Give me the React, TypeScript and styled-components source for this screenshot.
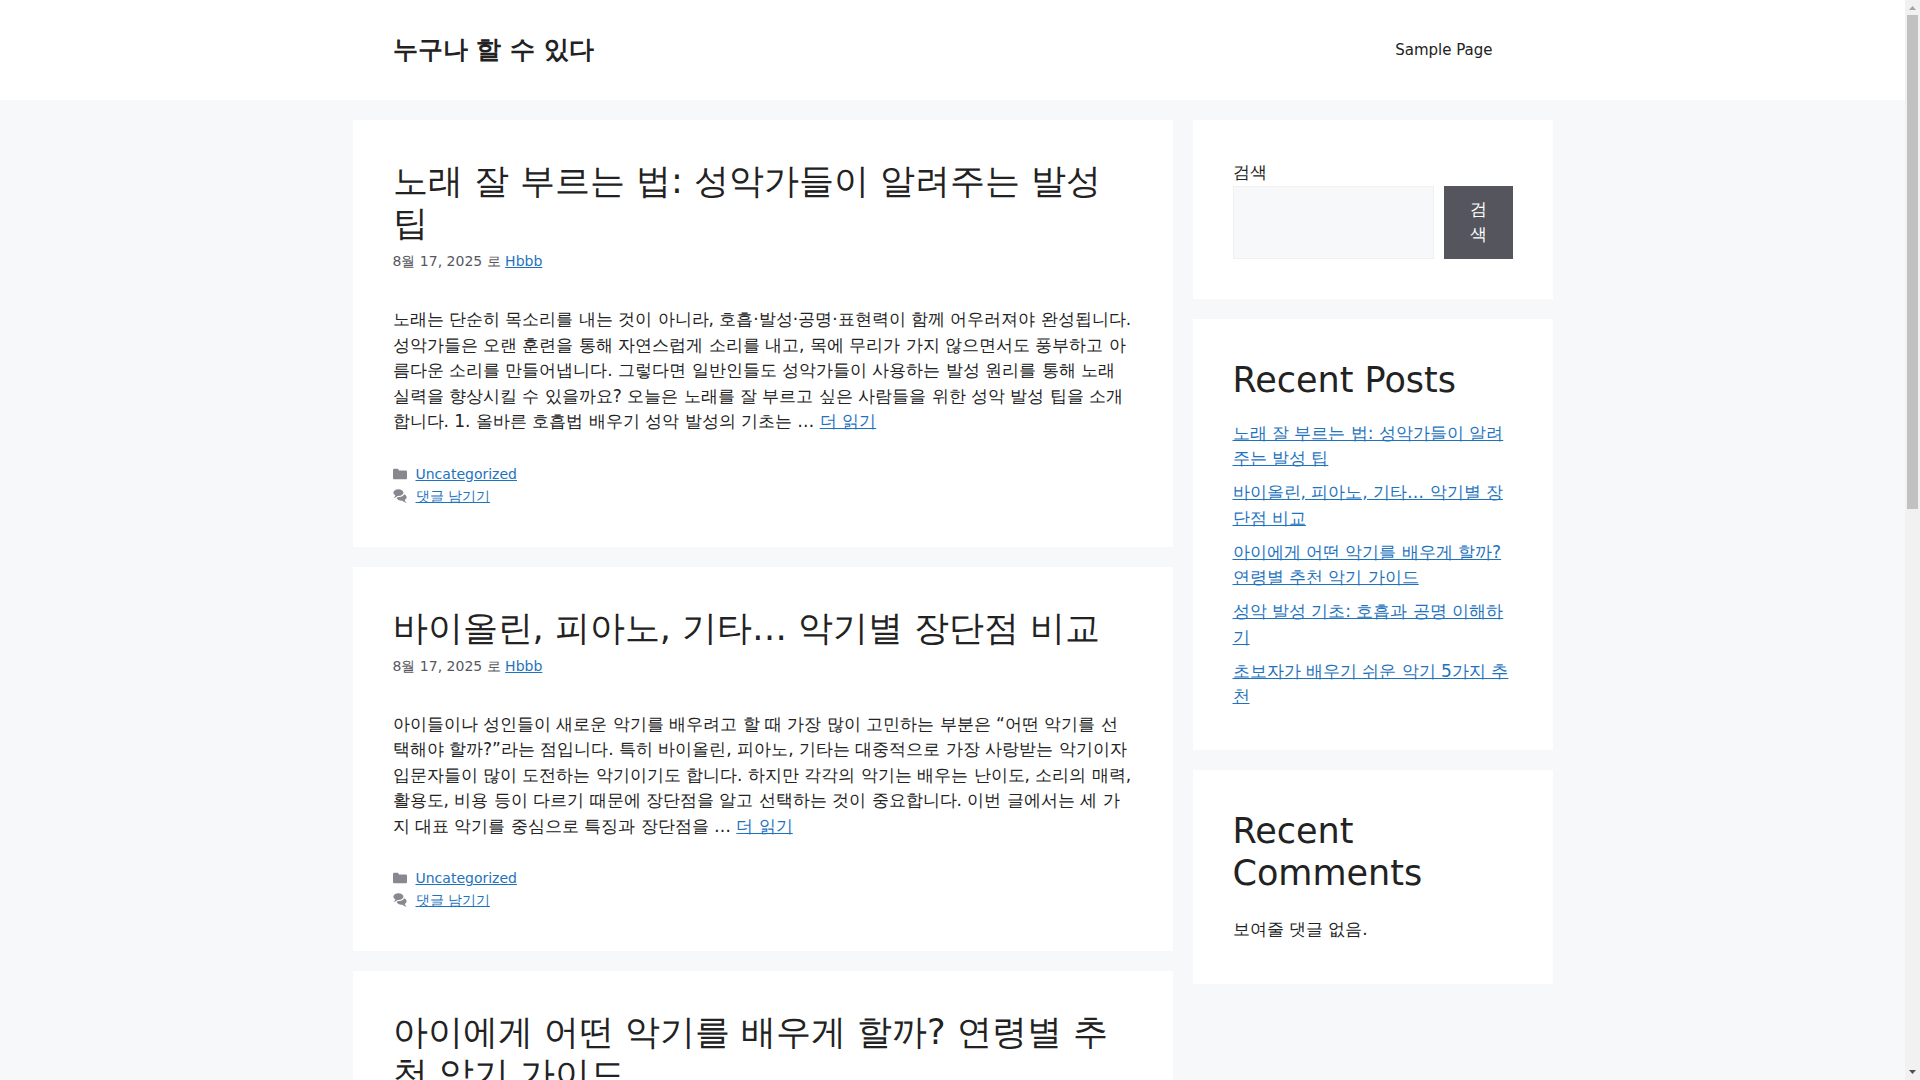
import React from "react";
import styled, { createGlobalStyle } from "styled-components";

const color = {
  text: "#222222",
  meta: "#575760",
  link: "#1e73be",
  page: "#f7f8f9",
  surface: "#ffffff",
  border: "#f0f0f0",
  button: "#55555e",
};

const fontStack = `"DejaVu Sans", sans-serif`;

const GlobalStyle = createGlobalStyle`
  *, *::before, *::after { box-sizing: border-box; }
  body {
    margin: 0;
    background: ${color.page};
    color: ${color.text};
    font-family: ${fontStack};
    font-size: 17px;
    line-height: 1.5;
  }
`;

const Shell = styled.div`
  display: flex;
  height: 100vh;
  overflow: hidden;
`;

const Scroller = styled.div`
  flex: 1;
  min-width: 0;
  overflow-y: auto;
  scrollbar-width: none;
`;

const ScrollBar = styled.div`
  display: flex;
  flex-direction: column;
  width: 15px;
  background: #f1f1f1;
`;

const ScrollArrow = styled.svg`
  display: block;
  flex: none;
  width: 15px;
  height: 15px;
`;

const ScrollTrack = styled.div`
  flex: 1;
  padding: 0 2px;
`;

const ScrollThumb = styled.div`
  height: 47%;
  background: #c1c1c1;
`;

const Header = styled.header`
  background: ${color.surface};
`;

const HeaderInner = styled.div`
  display: flex;
  align-items: center;
  justify-content: space-between;
  max-width: 1200px;
  margin: 0 auto;
  padding: 20px 40px;
`;

const SiteTitle = styled.p`
  margin: 0;
  font-size: 25px;
  font-weight: 700;
  line-height: 30px;
`;

const NavLink = styled.a`
  display: block;
  padding: 0 20px;
  color: ${color.text};
  font-size: 15px;
  line-height: 60px;
  text-decoration: none;
`;

const HomeLink = styled.a`
  color: inherit;
  text-decoration: none;
`;

const Page = styled.div`
  display: grid;
  grid-template-columns: minmax(0, 1fr) 360px;
  gap: 20px;
  align-items: start;
  max-width: 1200px;
  margin: 0 auto;
  padding: 20px 0;
`;

const Stack = styled.div`
  display: flex;
  flex-direction: column;
  gap: 20px;
`;

const Card = styled.section`
  padding: 40px;
  background: ${color.surface};
`;

const Heading = styled.h2<{ $spaced?: boolean }>`
  margin: 0 0 ${(p) => (p.$spaced ? "20px" : "0")};
  font-size: 35px;
  font-weight: 400;
  line-height: 42px;
`;

const Link = styled.a`
  color: ${color.link};
  text-decoration: underline;
`;

const Meta = styled.div`
  margin-top: 6px;
  color: ${color.meta};
  font-size: 14px;
  line-height: 22px;
`;

const Excerpt = styled.p`
  margin: 35px 0 0;
`;

const PostFooter = styled.footer`
  margin-top: 28px;
  color: ${color.meta};
  font-size: 14px;
  line-height: 22px;
`;

const FooterLine = styled.div`
  display: flex;
  align-items: center;
  gap: 9px;
`;

const Icon = styled.svg`
  width: 14px;
  height: 14px;
  fill: currentColor;
  opacity: 0.7;
`;

const SearchLabel = styled.label`
  display: block;
`;

const SearchRow = styled.div`
  display: flex;
  gap: 10px;
`;

const SearchInput = styled.input`
  flex: 1;
  min-width: 0;
  padding: 10px 15px;
  border: 1px solid ${color.border};
  border-radius: 0;
  background: ${color.page};
  color: ${color.text};
  font: inherit;
`;

const SearchButton = styled.button`
  width: 69px;
  padding: 10px 20px;
  border: 1px solid ${color.button};
  background: ${color.button};
  color: #ffffff;
  font: inherit;
  word-break: break-all;
  cursor: pointer;
`;

const PostList = styled.ul`
  display: flex;
  flex-direction: column;
  gap: 0.5em;
  margin: 0;
  padding: 0;
  list-style: none;
`;

const EmptyNote = styled.p`
  margin: 0;
  line-height: 1.8;
`;

const FolderIcon = () => (
  <Icon viewBox="0 0 512 512" aria-hidden="true">
    <path d="M0 112c0-26.51 21.49-48 48-48h110.014a48 48 0 0143.592 27.907l12.349 26.791A16 16 0 00228.486 128H464c26.51 0 48 21.49 48 48v224c0 26.51-21.49 48-48 48H48c-26.51 0-48-21.49-48-48V112z" />
  </Icon>
);

const CommentsIcon = () => (
  <Icon viewBox="0 0 512 512" aria-hidden="true">
    <path d="M132.838 329.973a435.298 435.298 0 0016.769-9.004c13.363-7.574 26.587-16.142 37.419-25.507 7.544.597 15.27.925 23.098.925 54.905 0 105.634-15.311 143.285-41.28 23.728-16.365 43.115-37.692 54.155-62.645 54.739 22.205 91.498 63.272 91.498 110.286 0 42.186-29.558 79.498-75.09 102.828 23.46 49.216 75.09 101.709 75.09 101.709s-115.837-38.35-154.424-78.46c-9.956 1.12-20.297 1.758-30.793 1.758-88.727 0-162.927-43.071-181.007-100.61z" />
    <path d="M383.371 132.502c0 70.603-82.961 127.787-185.216 127.787-10.496 0-20.837-.639-30.793-1.757-38.587 40.093-154.424 78.42-154.424 78.42s51.63-52.472 75.09-101.67c-45.532-23.321-75.09-60.619-75.09-102.79C12.938 61.9 95.9 4.716 198.155 4.716c102.255 0 185.216 57.183 185.216 127.787z" />
  </Icon>
);

type PostData = { title: string; excerpt?: string };

const posts: PostData[] = [
  {
    title: "노래 잘 부르는 법: 성악가들이 알려주는 발성 팁",
    excerpt:
      "노래는 단순히 목소리를 내는 것이 아니라, 호흡·발성·공명·표현력이 함께 어우러져야 완성됩니다. 성악가들은 오랜 훈련을 통해 자연스럽게 소리를 내고, 목에 무리가 가지 않으면서도 풍부하고 아름다운 소리를 만들어냅니다. 그렇다면 일반인들도 성악가들이 사용하는 발성 원리를 통해 노래 실력을 향상시킬 수 있을까요? 오늘은 노래를 잘 부르고 싶은 사람들을 위한 성악 발성 팁을 소개합니다. 1. 올바른 호흡법 배우기 성악 발성의 기초는 …",
  },
  {
    title: "바이올린, 피아노, 기타… 악기별 장단점 비교",
    excerpt:
      "아이들이나 성인들이 새로운 악기를 배우려고 할 때 가장 많이 고민하는 부분은 “어떤 악기를 선택해야 할까?”라는 점입니다. 특히 바이올린, 피아노, 기타는 대중적으로 가장 사랑받는 악기이자 입문자들이 많이 도전하는 악기이기도 합니다. 하지만 각각의 악기는 배우는 난이도, 소리의 매력, 활용도, 비용 등이 다르기 때문에 장단점을 알고 선택하는 것이 중요합니다. 이번 글에서는 세 가지 대표 악기를 중심으로 특징과 장단점을 …",
  },
  { title: "아이에게 어떤 악기를 배우게 할까? 연령별 추천 악기 가이드" },
];

const recentPosts = [
  "노래 잘 부르는 법: 성악가들이 알려주는 발성 팁",
  "바이올린, 피아노, 기타… 악기별 장단점 비교",
  "아이에게 어떤 악기를 배우게 할까? 연령별 추천 악기 가이드",
  "성악 발성 기초: 호흡과 공명 이해하기",
  "초보자가 배우기 쉬운 악기 5가지 추천",
];

const Post = ({ title, excerpt }: PostData) => (
  <Card as="article">
    <Heading>
      <HomeLink href="#">{title}</HomeLink>
    </Heading>
    {excerpt && (
      <>
        <Meta>
          8월 17, 2025 로 <Link href="#">Hbbb</Link>
        </Meta>
        <Excerpt>
          {excerpt} <Link href="#">더 읽기</Link>
        </Excerpt>
        <PostFooter>
          <FooterLine>
            <FolderIcon />
            <Link href="#">Uncategorized</Link>
          </FooterLine>
          <FooterLine>
            <CommentsIcon />
            <Link href="#">댓글 남기기</Link>
          </FooterLine>
        </PostFooter>
      </>
    )}
  </Card>
);

export default function App() {
  return (
    <>
      <GlobalStyle />
      <Shell>
        <Scroller>
          <Header>
            <HeaderInner>
              <SiteTitle>
                <HomeLink href="#">누구나 할 수 있다</HomeLink>
              </SiteTitle>
              <nav>
                <NavLink href="#">Sample Page</NavLink>
              </nav>
            </HeaderInner>
          </Header>
          <Page>
            <Stack as="main">
              {posts.map((post) => (
                <Post key={post.title} {...post} />
              ))}
            </Stack>
            <Stack as="aside">
              <Card>
                <form role="search" onSubmit={(e) => e.preventDefault()}>
                  <SearchLabel htmlFor="site-search">검색</SearchLabel>
                  <SearchRow>
                    <SearchInput id="site-search" type="search" />
                    <SearchButton type="submit">검색</SearchButton>
                  </SearchRow>
                </form>
              </Card>
              <Card>
                <Heading $spaced>Recent Posts</Heading>
                <PostList>
                  {recentPosts.map((title) => (
                    <li key={title}>
                      <Link href="#">{title}</Link>
                    </li>
                  ))}
                </PostList>
              </Card>
              <Card>
                <Heading $spaced>Recent Comments</Heading>
                <EmptyNote>보여줄 댓글 없음.</EmptyNote>
              </Card>
            </Stack>
          </Page>
        </Scroller>
        <ScrollBar aria-hidden="true">
          <ScrollArrow viewBox="0 0 15 15">
            <path d="M4 10h7L7.5 6z" fill="#a3a3a3" />
          </ScrollArrow>
          <ScrollTrack>
            <ScrollThumb />
          </ScrollTrack>
          <ScrollArrow viewBox="0 0 15 15">
            <path d="M4 5h7L7.5 9z" fill="#505050" />
          </ScrollArrow>
        </ScrollBar>
      </Shell>
    </>
  );
}
